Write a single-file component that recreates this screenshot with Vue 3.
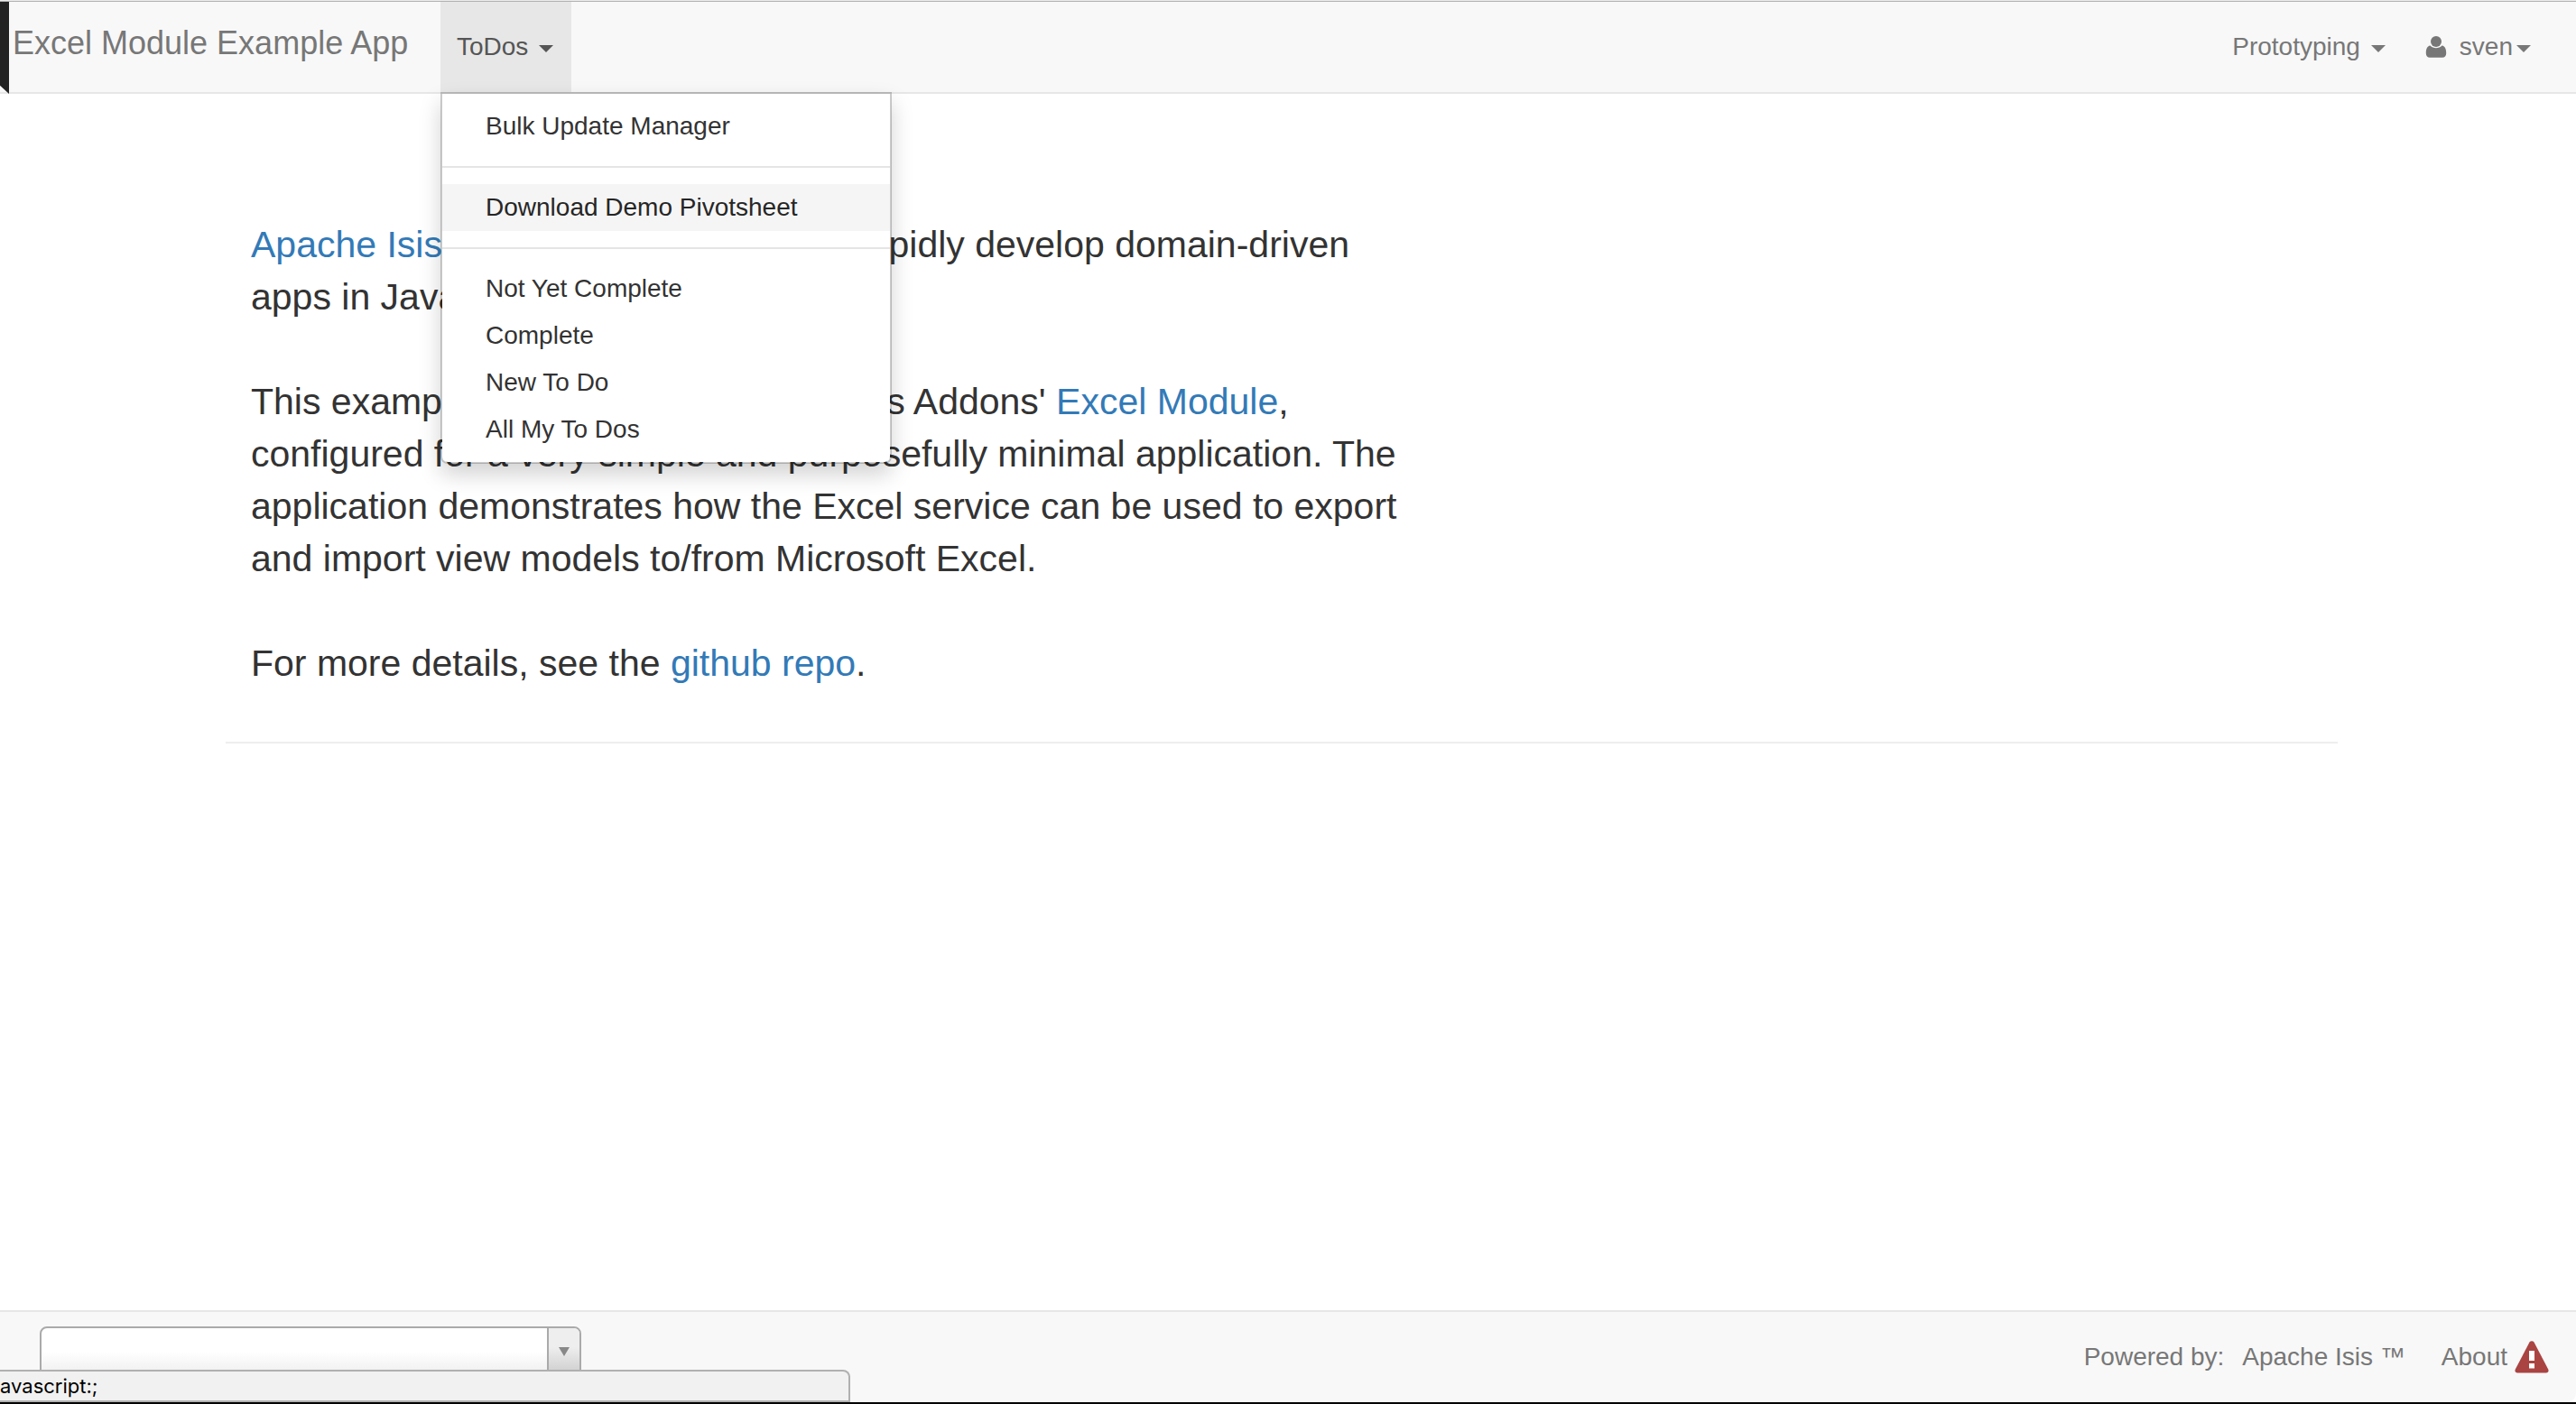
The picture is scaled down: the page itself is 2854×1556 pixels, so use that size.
<script setup>
import { ref } from 'vue'

const groups = [
  ['Bulk Update Manager'],
  ['Download Demo Pivotsheet'],
  ['Not Yet Complete', 'Complete', 'New To Do', 'All My To Dos'],
]
const active = ref('Download Demo Pivotsheet')
const bookmark = ref('')
</script>

<template>
  <div class="page">
    <header class="navbar">
      <span class="ribbon"></span>
      <a class="brand" href="#">Excel Module Example App</a>
      <nav class="menu">
        <button class="toggle open" type="button" aria-expanded="true">ToDos<span class="caret"></span></button>
        <ul class="dropdown">
          <template v-for="(group, i) in groups" :key="i">
            <li v-if="i > 0" class="divider" role="separator"></li>
            <li v-for="item in group" :key="item">
              <a href="#" :class="{ active: item === active }" @mouseenter="active = item">{{ item }}</a>
            </li>
          </template>
        </ul>
      </nav>
      <nav class="tertiary">
        <button class="toggle" type="button">Prototyping<span class="caret"></span></button>
        <button class="toggle user" type="button">
          <svg class="user-icon" viewBox="0 0 24 24" aria-hidden="true">
            <circle cx="12" cy="6" r="6" />
            <path d="M5.500 10.500C2 11 .8 14.500.8 19c0 3 1.700 4.800 4.200 4.800h14c2.500 0 4.200-1.800 4.200-4.800 0-4.500-1.200-8-4.700-8.500C16.800 12.200 14.600 13.200 12 13.200s-4.800-1-6.500-2.700z" />
          </svg>sven<span class="caret"></span>
        </button>
      </nav>
    </header>

    <main class="content">
      <div class="container">
        <div class="lead">
          <p><a href="#">Apache Isis</a> is a platform to help you rapidly develop domain-driven<br>apps in Java.</p>
          <p>This example app demonstrates the Isis Addons' <a href="#">Excel Module</a>,<br>configured for a very simple and purposefully minimal application. The<br>application demonstrates how the Excel service can be used to export<br>and import view models to/from Microsoft Excel.</p>
          <p>For more details, see the <a href="#">github repo</a>.</p>
        </div>
        <hr>
      </div>
    </main>

    <footer class="footer">
      <div class="picker">
        <select v-model="bookmark" aria-label="Bookmarks">
          <option value=""></option>
        </select>
        <span class="picker-arrow"><svg viewBox="0 0 12 10" aria-hidden="true"><path d="M0 0h12L6 10z" /></svg></span>
      </div>
      <div class="credits">
        <span>Powered by:</span>
        <a class="isis" href="#">Apache Isis ™</a>
        <a class="about" href="#">About</a>
        <svg class="warning" viewBox="0 0 38 36" aria-hidden="true">
          <path class="sign" d="M16.500 1.500a3 3 0 0 1 5 0L37.200 31.500c1 2-.2 4-2.400 4H3.200c-2.200 0-3.400-2-2.400-4z" />
          <path class="mark" d="M16 11h6v11h-6zM16 25h6v5.500h-6z" />
        </svg>
      </div>
      <div class="status">avascript:;</div>
    </footer>
  </div>
</template>

<style>
body {
  margin: 0;
  background: #fff;
}
</style>

<style scoped>
.page {
  display: flex;
  flex-direction: column;
  min-height: 100vh;
  box-sizing: border-box;
  border-bottom: 2px solid #000;
  font-family: "Liberation Sans", Arial, sans-serif;
  font-size: 28px;
  color: #333;
}

a {
  color: #337ab7;
  text-decoration: none;
}

.navbar {
  position: relative;
  display: flex;
  height: 100px;
  padding-top: 2px;
  background: #f8f8f8;
  border-bottom: 2px solid #e7e7e7;
  box-shadow: inset 0 1px #ececec, inset 0 2px #b2b2b2;
}

.ribbon {
  position: absolute;
  left: 0;
  top: 2px;
  width: 10px;
  height: 102px;
  background: #222;
  clip-path: polygon(0 0, 100% 0, 100% 100%, 0 91%);
}

.brand {
  width: 474px;
  padding-left: 14px;
  font-size: 36px;
  line-height: 92px;
  color: #777;
}

.menu {
  position: relative;
}

.toggle {
  display: flex;
  align-items: center;
  height: 100px;
  padding: 0 20px 0 18px;
  border: 0;
  background: none;
  font: inherit;
  color: #777;
}

.toggle.open {
  background: #e7e7e7;
  color: #555;
}

.caret {
  margin-left: 12px;
  margin-top: 4px;
  border: 8px solid transparent;
  border-top-color: currentColor;
  border-bottom: 0;
}

.dropdown {
  position: absolute;
  z-index: 10;
  top: 100px;
  left: 0;
  box-sizing: border-box;
  width: 500px;
  margin: 0;
  padding: 10px 0;
  list-style: none;
  background: #fff;
  background-clip: padding-box;
  border: 2px solid rgba(0, 0, 0, 0.2);
  border-radius: 0 0 8px 8px;
  box-shadow: 0 12px 24px rgba(0, 0, 0, 0.175);
}

.dropdown a {
  display: block;
  padding: 0 48px;
  line-height: 52px;
  color: #333;
}

.dropdown a.active {
  background: #f5f5f5;
  color: #262626;
}

.divider {
  height: 2px;
  margin: 18px 0;
  background: #e5e5e5;
}

.tertiary {
  display: flex;
  margin-left: auto;
  padding-right: 24px;
}

.tertiary .toggle {
  padding-right: 26px;
}

.user .caret {
  margin-left: 4px;
}

.user-icon {
  width: 24px;
  height: 24px;
  margin-right: 14px;
  fill: #777;
}

.content {
  flex: 1;
  padding: 138px 14px 0 0;
}

.container {
  max-width: 2340px;
  margin: 0 auto;
}

.lead {
  padding: 0 28px;
  font-size: 41px;
  line-height: 58px;
}

.lead p {
  margin: 0 0 58px;
}

hr {
  margin: 0;
  border: 0;
  border-top: 2px solid #eee;
}

.footer {
  position: relative;
  display: flex;
  justify-content: space-between;
  height: 100px;
  border-top: 2px solid #e7e7e7;
  border-bottom-right-radius: 10px;
  background: #f8f8f8;
}

.picker {
  display: flex;
  box-sizing: border-box;
  width: 600px;
  height: 56px;
  margin: 16px 0 0 44px;
  overflow: hidden;
  border: 2px solid #aaa;
  border-radius: 8px;
  background: linear-gradient(#fff 50%, #eee);
}

.picker select {
  flex: 1;
  appearance: none;
  border: 0;
  background: none;
  font: inherit;
}

.picker-arrow {
  display: flex;
  justify-content: center;
  align-items: center;
  width: 34px;
  border-left: 2px solid #aaa;
  background: linear-gradient(#eee 40%, #ccc);
}

.picker-arrow svg {
  width: 12px;
  height: 10px;
  fill: #888;
}

.credits {
  display: flex;
  height: 100px;
  padding-right: 30px;
  line-height: 100px;
  color: #777;
}

.credits a {
  color: #777;
}

.isis {
  margin-left: 20px;
}

.about {
  margin-left: 40px;
}

.warning {
  width: 38px;
  height: 36px;
  margin: 32px 0 0 8px;
}

.sign {
  fill: #a94442;
}

.mark {
  fill: #fff;
}

.status {
  position: absolute;
  left: 0;
  bottom: 0;
  box-sizing: border-box;
  width: 942px;
  height: 36px;
  border: 2px solid #b0b0b0;
  border-left: 0;
  border-top-right-radius: 8px;
  background: #f1f1f1;
  font-family: Inter, sans-serif;
  font-size: 22px;
  line-height: 32px;
  color: #000;
}
</style>
